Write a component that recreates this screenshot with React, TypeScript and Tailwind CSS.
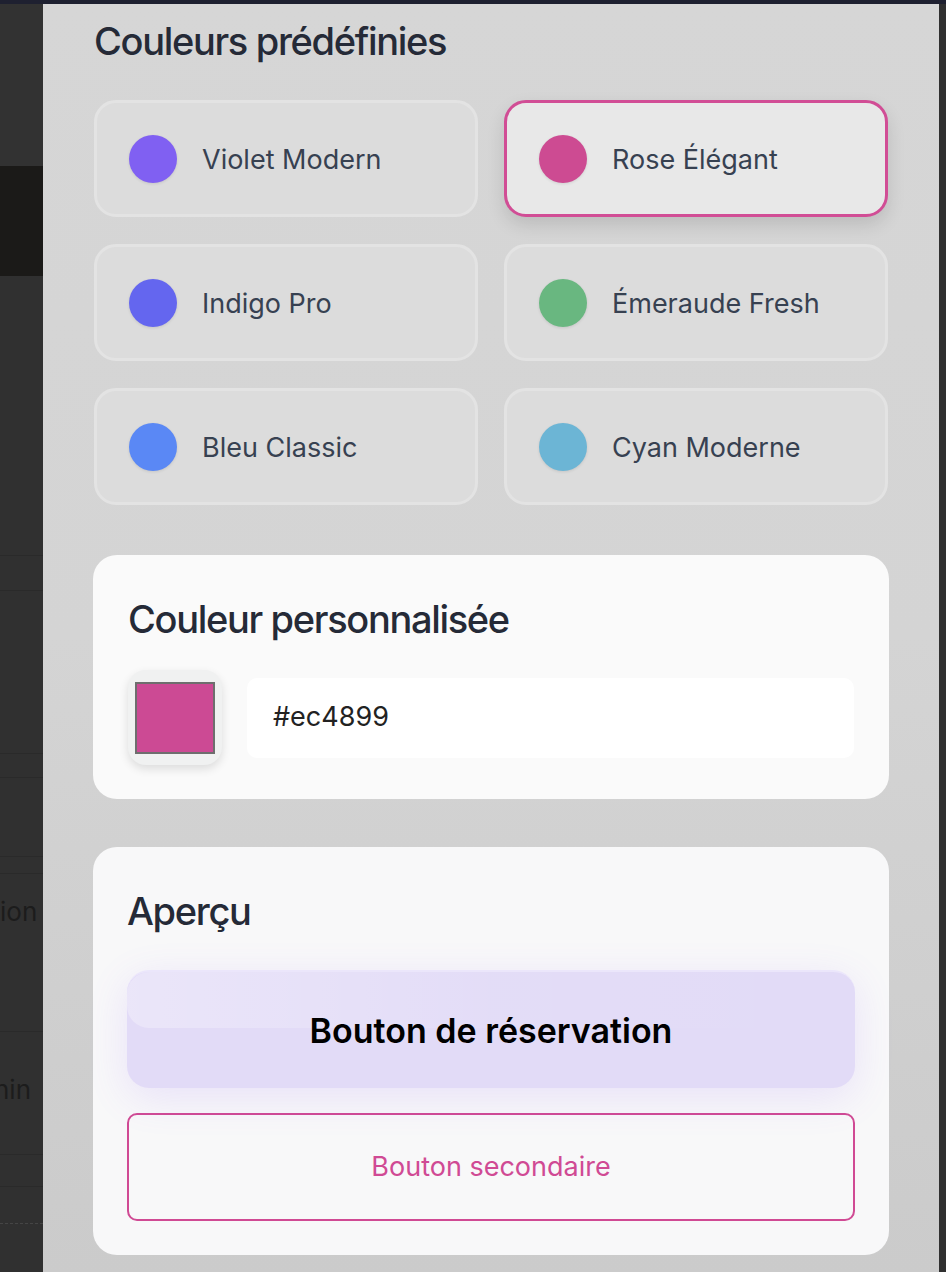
import React from "react";

const presets = [
  { name: "Violet Modern", color: "bg-[#8060f2]", selected: false },
  { name: "Rose Élégant", color: "bg-[#cd4b92]", selected: true },
  { name: "Indigo Pro", color: "bg-[#6466ef]", selected: false },
  { name: "Émeraude Fresh", color: "bg-[#69b780]", selected: false },
  { name: "Bleu Classic", color: "bg-[#5a88f5]", selected: false },
  { name: "Cyan Moderne", color: "bg-[#6cb5d5]", selected: false },
];

// background page peeking out to the left of the modal
const SideStrip = () => (
  <div className="flex h-full w-[43px] flex-col bg-[#303030]">
    <div className="h-[162px] bg-[#323232]" />
    <div className="h-[110px] bg-[#1b1a18]" />
    <div className="h-[280px] border-b border-[#2a2a2a]" />
    <div className="h-[35px] border-b border-[#2a2a2a]" />
    <div className="h-[163px] border-b border-[#2a2a2a]" />
    <div className="h-[24px] border-b border-[#2a2a2a]" />
    <div className="h-[79px] border-b border-[#2a2a2a]" />
    <div className="h-[17px] border-b border-[#2a2a2a]" />
    <div className="flex h-[158px] items-start overflow-hidden border-b border-[#2a2a2a] pt-[24px]">
      <span className="ml-0 text-[26px] leading-[28px] text-[#1c1c1c]">ion</span>
    </div>
    <div className="flex h-[123px] items-start overflow-hidden border-b border-[#2a2a2a] pt-[44px]">
      <span className="-ml-[6px] text-[26px] leading-[28px] text-[#1c1c1c]">nin</span>
    </div>
    <div className="h-[32px] border-b border-[#2a2a2a]" />
    <div className="h-[37px] border-b border-dashed border-[#454545]" />
  </div>
);

const PresetCard = ({ name, color, selected }: { name: string; color: string; selected: boolean }) => (
  <div
    className={
      selected
        ? "flex h-[117px] items-center gap-[25px] rounded-[22px] border-[3px] border-[#d14d95] bg-[#e8e8e8] px-[32px] shadow-[0_8px_18px_rgba(0,0,0,0.12)]"
        : "flex h-[117px] items-center gap-[25px] rounded-[22px] border-[3px] border-[#e3e3e3] bg-[#dcdcdc] px-[32px]"
    }
  >
    <div className={`h-[48px] w-[48px] shrink-0 rounded-full ${color} shadow-[0_1px_3px_rgba(0,0,0,0.1)]`} />
    <span className="mt-[4px] text-[27px] text-[#374151]">{name}</span>
  </div>
);

export default function App() {
  return (
    <div className="flex h-[1272px] w-[946px] flex-col overflow-hidden bg-[#303030] font-['Inter',sans-serif]">
      <div className="h-[4px] bg-[#1e2030]" />
      <div className="flex flex-1">
        <SideStrip />

        {/* Panel */}
        <div className="flex-1 bg-gradient-to-b from-[#d6d6d6] via-[#d4d4d4] to-[#cbcbcb] px-[51px] pt-[13px]">
          <h2 className="text-[38px] font-medium leading-[48px] tracking-[-0.035em] text-[#252a37]">
            Couleurs prédéfinies
          </h2>

          <div className="mt-[35px] grid grid-cols-2 gap-x-[26px] gap-y-[27px]">
            {presets.map((p) => (
              <PresetCard key={p.name} {...p} />
            ))}
          </div>

          {/* Custom colour */}
          <div className="-mx-px mt-[50px] rounded-[24px] bg-[#fafafa] px-[35px] pb-[34px] pt-[40px]">
            <h3 className="text-[38px] font-medium leading-[48px] tracking-[-0.035em] text-[#252a37]">
              Couleur personnalisée
            </h3>
            <div className="mt-[27px] flex items-center gap-[25px]">
              <div className="flex h-[95px] w-[94px] items-center justify-center rounded-[18px] bg-[#f0f1f1] shadow-[0_4px_10px_rgba(0,0,0,0.12)]">
                <div className="h-[72px] w-[80px] border-[2px] border-[#6e6e6e] bg-[#cc4a94]" />
              </div>
              <div className="flex h-[80px] flex-1 items-center rounded-[10px] bg-white px-[26px] text-[27px] text-[#222]">
                #ec4899
              </div>
            </div>
          </div>

          {/* Preview */}
          <div className="-mx-px mt-[48px] rounded-[24px] bg-[#f8f8f9] px-[34px] pb-[34px] pt-[40px]">
            <h3 className="text-[38px] font-medium leading-[48px] tracking-[-0.035em] text-[#252a37]">
              Aperçu
            </h3>
            <div className="relative mt-[35px] flex h-[118px] items-center justify-center overflow-hidden rounded-[22px] border-t-[2px] border-[#ebe6fb] bg-[#e2dbf7] shadow-[0_10px_40px_rgba(139,92,246,0.14)]">
              <div className="absolute left-0 top-0 h-[56px] w-full rounded-[22px] bg-gradient-to-r from-white/30 via-white/5 to-transparent" />
              <span className="relative text-[34px] font-semibold text-black">
                Bouton de réservation
              </span>
            </div>
            <div className="mt-[25px] flex h-[108px] items-center justify-center rounded-[10px] border-[2px] border-[#d04a94] text-[27px] text-[#d04a94]">
              Bouton secondaire
            </div>
          </div>
        </div>

        <div className="w-[7px] bg-[#303030]" />
      </div>
    </div>
  );
}
